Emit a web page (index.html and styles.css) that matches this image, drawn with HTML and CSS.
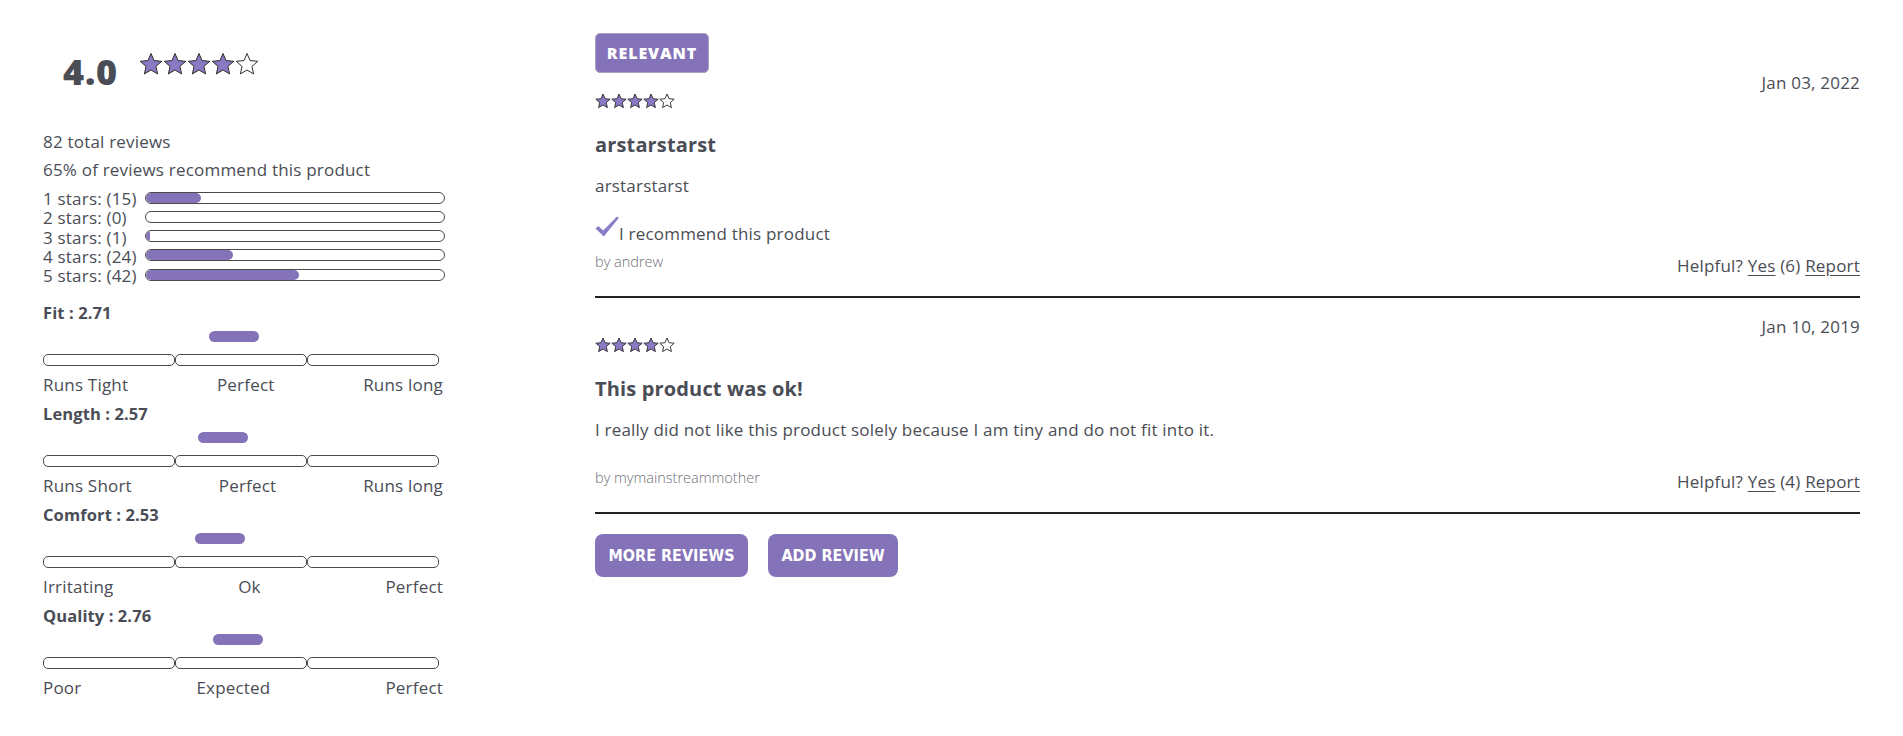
FILE: index.html
```html
<!DOCTYPE html>
<html>
<head>
<meta charset="utf-8">
<link rel="stylesheet" href="styles.css">
</head>
<body>
<svg width="0" height="0" class="defs">
  <defs>
    <symbol id="star" viewBox="0 0 24 24">
      <polygon points="12,1.5 15.06,8.59 22.75,9.31 16.95,14.41 18.64,21.94 12,18 5.36,21.94 7.05,14.41 1.25,9.31 8.94,8.59"/>
    </symbol>
  </defs>
</svg>
<div class="page">
  <aside class="summary">
    <div class="summary-head">
      <div class="avg">4.0</div>
      <div class="stars stars-lg">
        <svg class="star on"><use href="#star"/></svg>
        <svg class="star on"><use href="#star"/></svg>
        <svg class="star on"><use href="#star"/></svg>
        <svg class="star on"><use href="#star"/></svg>
        <svg class="star off"><use href="#star"/></svg>
      </div>
    </div>
    <p class="total">82 total reviews</p>
    <p class="recommend-pct">65% of reviews recommend this product</p>
    <div class="dist">
      <div class="dist-row"><span class="dist-label">1 stars: (15)</span><div class="bar"><div class="bar-fill" style="width:18.29%"></div></div></div>
      <div class="dist-row"><span class="dist-label">2 stars: (0)</span><div class="bar"><div class="bar-fill" style="width:0%"></div></div></div>
      <div class="dist-row"><span class="dist-label">3 stars: (1)</span><div class="bar"><div class="bar-fill" style="width:1.22%"></div></div></div>
      <div class="dist-row"><span class="dist-label">4 stars: (24)</span><div class="bar"><div class="bar-fill" style="width:29.27%"></div></div></div>
      <div class="dist-row"><span class="dist-label">5 stars: (42)</span><div class="bar"><div class="bar-fill" style="width:51.22%"></div></div></div>
    </div>

    <div class="char">
      <h4 class="char-title">Fit : 2.71</h4>
      <div class="char-track"><div class="char-pill" style="left:41.9%"></div></div>
      <div class="segs"><div class="seg"></div><div class="seg"></div><div class="seg"></div></div>
      <div class="char-labels"><span>Runs Tight</span><span>Perfect</span><span>Runs long</span></div>
    </div>
    <div class="char">
      <h4 class="char-title">Length : 2.57</h4>
      <div class="char-track"><div class="char-pill" style="left:39.1%"></div></div>
      <div class="segs"><div class="seg"></div><div class="seg"></div><div class="seg"></div></div>
      <div class="char-labels"><span>Runs Short</span><span>Perfect</span><span>Runs long</span></div>
    </div>
    <div class="char">
      <h4 class="char-title">Comfort : 2.53</h4>
      <div class="char-track"><div class="char-pill" style="left:38.4%"></div></div>
      <div class="segs"><div class="seg"></div><div class="seg"></div><div class="seg"></div></div>
      <div class="char-labels"><span>Irritating</span><span>Ok</span><span>Perfect</span></div>
    </div>
    <div class="char">
      <h4 class="char-title">Quality : 2.76</h4>
      <div class="char-track"><div class="char-pill" style="left:42.9%"></div></div>
      <div class="segs"><div class="seg"></div><div class="seg"></div><div class="seg"></div></div>
      <div class="char-labels"><span>Poor</span><span>Expected</span><span>Perfect</span></div>
    </div>
  </aside>

  <main class="reviews">
    <button class="sort-btn">RELEVANT</button>

    <article class="review">
      <div class="review-head">
        <div class="stars stars-sm">
          <svg class="star on"><use href="#star"/></svg>
          <svg class="star on"><use href="#star"/></svg>
          <svg class="star on"><use href="#star"/></svg>
          <svg class="star on"><use href="#star"/></svg>
          <svg class="star off"><use href="#star"/></svg>
        </div>
        <div class="date">Jan 03, 2022</div>
      </div>
      <h3 class="review-title">arstarstarst</h3>
      <p class="review-body">arstarstarst</p>
      <div class="recommend">
        <svg class="check" viewBox="0 0 24 22"><path d="M0.5 12.5 L3.2 10 L8.2 14.6 L22 0.5 L23.8 2 L8.8 20.5 Z"/></svg>
        <span>I recommend this product</span>
      </div>
      <div class="review-foot">
        <span class="author">by andrew</span>
        <span class="helpful">Helpful? <a href="#">Yes</a> (6) <a href="#">Report</a></span>
      </div>
    </article>

    <article class="review">
      <div class="review-head">
        <div class="stars stars-sm">
          <svg class="star on"><use href="#star"/></svg>
          <svg class="star on"><use href="#star"/></svg>
          <svg class="star on"><use href="#star"/></svg>
          <svg class="star on"><use href="#star"/></svg>
          <svg class="star off"><use href="#star"/></svg>
        </div>
        <div class="date">Jan 10, 2019</div>
      </div>
      <h3 class="review-title">This product was ok!</h3>
      <p class="review-body">I really did not like this product solely because I am tiny and do not fit into it.</p>
      <div class="recommend"></div>
      <div class="review-foot">
        <span class="author">by mymainstreammother</span>
        <span class="helpful">Helpful? <a href="#">Yes</a> (4) <a href="#">Report</a></span>
      </div>
    </article>

    <div class="actions">
      <button class="action-btn">MORE REVIEWS</button>
      <button class="action-btn">ADD REVIEW</button>
    </div>
  </main>
</div>
</body>
</html>
```
FILE: styles.css
```css
* { box-sizing: border-box; }
html, body { margin: 0; padding: 0; background: #fff; }
body {
  font-family: "Open Sans", "Noto Sans", sans-serif;
  color: #4a4d55;
  font-size: 17px;
  letter-spacing: 0.2px;
}
.defs { position: absolute; width: 0; height: 0; overflow: hidden; }

.page {
  display: flex;
  padding: 33px 43px 0 43px;
  gap: 150px;
}

/* ---------- summary column ---------- */
.summary { width: 402px; flex: none; }
.summary-head {
  display: flex;
  align-items: flex-start;
  margin-top: 19px;
  padding-left: 20px;
}
.avg {
  font-size: 36px;
  font-weight: 800;
  line-height: 35px;
  color: #4a4d55;
  margin-top: 2px;
  letter-spacing: 0.8px;
}
.stars { display: flex; }
.stars-lg { margin-left: 21px; }
.stars-lg .star { width: 24px; height: 24px; stroke-width: 1; }
.star { display: block; stroke: #2f2f2f; stroke-width: 1.2; stroke-linejoin: miter; overflow: visible; }
.star.on { fill: #8a79c3; }
.star.off { fill: #fff; }

.total, .recommend-pct { margin: 0; line-height: 28px; }
.total { margin-top: 39px; }

.dist { margin-top: 5px; margin-bottom: 18px; }
.dist-row {
  display: flex;
  align-items: center;
  height: 19.25px;
}
.dist-label { width: 102px; flex: none; line-height: 19px; white-space: nowrap; }
.bar {
  width: 300px;
  height: 12px;
  border: 1px solid #4a4a4a;
  border-bottom-width: 1.5px;
  border-radius: 6px;
  overflow: hidden;
  background: #fff;
  margin-top: -2px;
}
.bar-fill { height: 100%; background: #8473b8; border-radius: 6px; }

.char { width: 396px; margin-bottom: 9px; }
.char-title { margin: 0; font-size: 16.5px; font-weight: 700; line-height: 20px; letter-spacing: 0.1px; }
.char-track { position: relative; height: 11px; margin-top: 8px; }
.char-pill {
  position: absolute;
  top: 0;
  width: 50px;
  height: 11px;
  border-radius: 6px;
  background: #8473b8;
}
.segs { display: flex; margin-top: 12px; }
.seg {
  flex: 1;
  height: 12px;
  border: 1px solid #4a4a4a;
  border-bottom-width: 1.5px;
  border-radius: 5px;
}
.char-labels {
  display: flex;
  justify-content: space-between;
  margin-top: 9px;
  margin-right: -4px;
  line-height: 20px;
}

/* ---------- reviews column ---------- */
.reviews { flex: 1; min-width: 0; }
.sort-btn {
  display: block;
  height: 40px;
  width: 114px;
  padding: 0;
  background: #8473b8;
  border: 1px solid #a9a3b8;
  border-radius: 5px;
  color: #fff;
  font-family: "Open Sans", sans-serif;
  font-weight: 800;
  font-size: 16px;
  letter-spacing: 0.9px;
}

.review { border-bottom: 2px solid #222; padding-bottom: 20px; }
.review + .review { padding-top: 19px; }
.review-head { display: flex; justify-content: space-between; align-items: flex-start; }
.stars-sm { margin-top: 20px; }
.stars-sm .star { width: 16px; height: 16px; stroke-width: 1.4; }
.date { line-height: 20px; }
.review-title { margin: 24px 0 0; font-size: 20px; font-weight: 700; line-height: 24px; letter-spacing: 0.15px; }
.review-body { margin: 19px 0 0; line-height: 20px; }
.recommend { display: flex; align-items: flex-end; margin-top: 20px; }
.recommend:empty { height: 0; }
.recommend .check { width: 24px; height: 22px; fill: #8c7bc6; align-self: flex-start; }
.recommend span { line-height: 20px; margin-top: 8px; }
.review-foot { display: flex; justify-content: space-between; align-items: flex-start; margin-top: 8px; }
.author { font-size: 14.5px; line-height: 20px; color: #6e7077; font-weight: 300; letter-spacing: 0; }
.helpful { line-height: 20px; margin-top: 4px; }
.helpful a { color: inherit; text-decoration: underline; text-underline-offset: 3px; }

.actions { display: flex; gap: 20px; margin-top: 20px; }
.action-btn {
  height: 43px;
  padding: 0 13px;
  background: #8473b8;
  border: none;
  border-radius: 8px;
  color: #fff;
  font-family: "DejaVu Sans Condensed", "DejaVu Sans", sans-serif;
  font-stretch: condensed;
  font-weight: 700;
  font-size: 16px;
  letter-spacing: 0;
}
.action-btn:first-child { width: 153px; }
.action-btn:last-child { width: 130px; }
```
